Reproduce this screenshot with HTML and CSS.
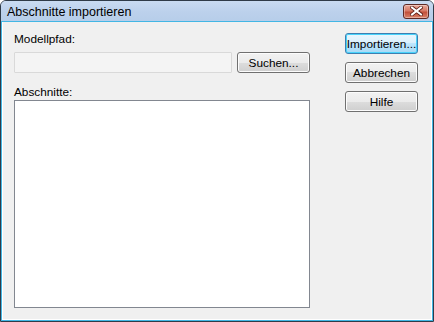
FILE: index.html
```html
<!DOCTYPE html>
<html lang="de">
<head>
    <meta charset="UTF-8">
    <title>Abschnitte importieren</title>
    <link rel="stylesheet" href="styles.css">
</head>
<body>
    <div class="window">
        <div class="titlebar">
            <span class="title">Abschnitte importieren</span>
            <button class="close" title="Schließen">
                <svg width="13" height="10" viewBox="0 0 13 10">
                    <path d="M2 1.5 L11 8.5 M11 1.5 L2 8.5" stroke="#5a1c14" stroke-width="3.6" stroke-linecap="square"/>
                    <path d="M2 1.5 L11 8.5 M11 1.5 L2 8.5" stroke="#fff" stroke-width="2" stroke-linecap="square"/>
                </svg>
            </button>
        </div>
        <div class="client">
            <div class="left">
                <label for="pfad">Modellpfad:</label>
                <div class="path-row">
                    <input type="text" id="pfad" class="field" disabled>
                    <button class="btn">Suchen...</button>
                </div>
                <label for="liste" class="label-list">Abschnitte:</label>
                <div id="liste" class="listbox"></div>
            </div>
            <div class="right">
                <button class="btn default">Importieren...</button>
                <button class="btn">Abbrechen</button>
                <button class="btn">Hilfe</button>
            </div>
        </div>
    </div>
</body>
</html>
```

FILE: styles.css
```css
html, body { margin: 0; height: 100%; }
body { font-family: Tahoma, "Liberation Sans", "DejaVu Sans", sans-serif; font-size: 11.8px; color: #000; background: #fff; }
.window { box-sizing: border-box; height: 322px; width: 434px; border: 1px solid #2f3b48; border-radius: 6px 6px 0 0; background: #c8dbf1; display: flex; flex-direction: column; overflow: hidden; }
.titlebar { height: 21px; display: flex; align-items: center; justify-content: space-between; padding: 0 4px 0 6px; background: linear-gradient(#c9dbf1, #bcd1ec 50%, #b6cde9); }
.title { font-family: "Segoe UI", "Liberation Sans", sans-serif; font-size: 12.5px; color: #000; }
.close { width: 26px; height: 15px; margin-top: -1px; padding: 0; border: 1px solid #5d2a25; border-radius: 3px; background: linear-gradient(#e9a99a, #d67a66 45%, #c2503a 55%, #d9826a); display: flex; align-items: center; justify-content: center; box-shadow: inset 0 0 0 1px rgba(255,255,255,0.35); }
.client { flex: 1; display: flex; margin: 0 1px 1px 1px; padding: 11px 10px 11px 11px; background: #f0f0f0; border: 1px solid #fff; border-top: 0; box-shadow: 0 0 0 1px #42b6e4; }
.left { width: 296px; display: flex; flex-direction: column; }
label { display: block; line-height: 13px; }
.path-row { display: flex; gap: 5px; margin-top: 6px; }
.field { box-sizing: border-box; width: 218px; height: 21px; margin: 0; border: 1px solid #d9d9d9; border-radius: 1px; background: #f4f4f4; }
.label-list { margin-top: 13px; }
.listbox { box-sizing: border-box; flex: 1; margin-top: 1px; border: 1px solid #828790; background: #fff; }
.right { margin-left: 35px; display: flex; flex-direction: column; gap: 8px; }
.btn { box-sizing: border-box; width: 73px; height: 21px; padding: 0; font-family: inherit; font-size: 11.8px; color: #000; border: 1px solid #707070; border-radius: 3px; background: linear-gradient(#f2f2f2, #ebebeb 50%, #dddddd 50%, #cfcfcf); box-shadow: inset 0 0 0 1px #fcfcfc; }
.btn.default { border-color: #3c7fb1; background: linear-gradient(#eaf6fd, #d9f0fc 50%, #bee6fd 50%, #a7d9f5); box-shadow: inset 0 0 0 1px #48d3fb; }
```
